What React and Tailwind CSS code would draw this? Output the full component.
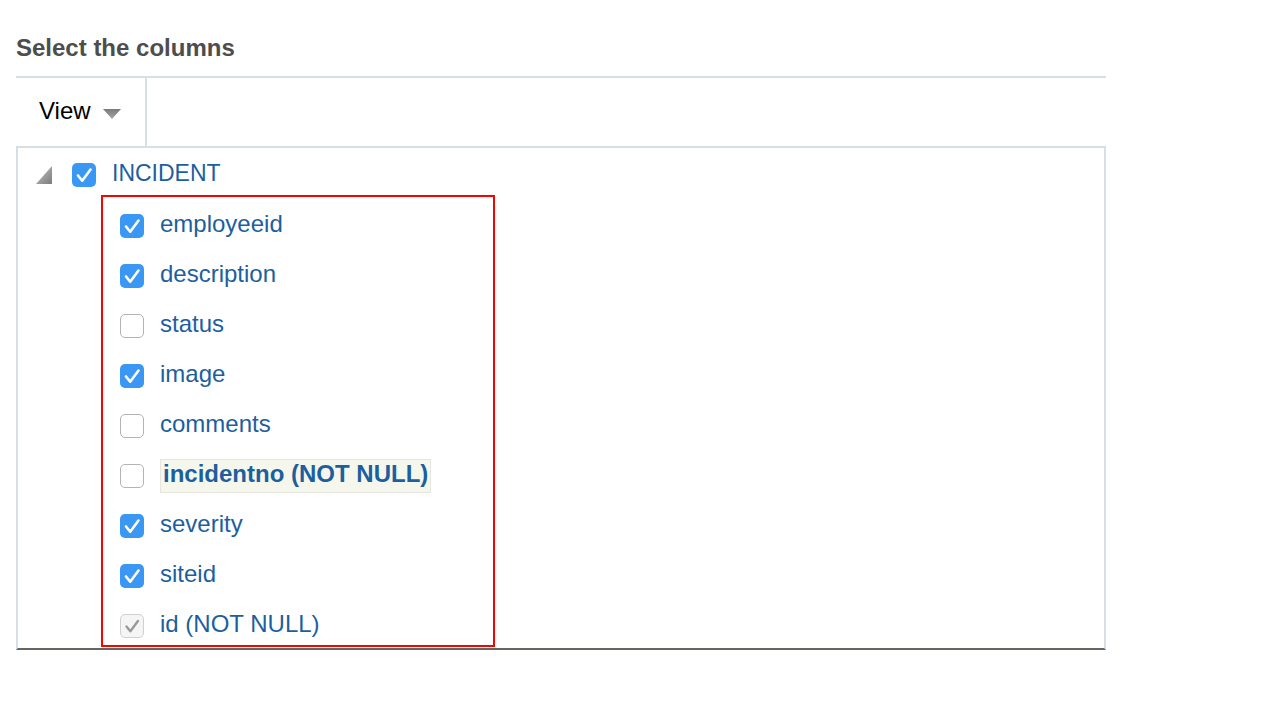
import React from "react";

const columns = [
  { name: "employeeid", state: "on" },
  { name: "description", state: "on" },
  { name: "status", state: "off" },
  { name: "image", state: "on" },
  { name: "comments", state: "off" },
  { name: "incidentno (NOT NULL)", state: "off", highlight: true },
  { name: "severity", state: "on" },
  { name: "siteid", state: "on" },
  { name: "id (NOT NULL)", state: "disabled" },
];

function Check({ color }) {
  return (
    <svg viewBox="0 0 24 24" className="w-[24px] h-[24px]">
      <path
        d="M6 12.5l4.2 5.2L18.5 6.5"
        fill="none"
        stroke={color}
        strokeWidth="2.6"
        strokeLinecap="round"
        strokeLinejoin="round"
      />
    </svg>
  );
}

function Checkbox({ state }) {
  if (state === "on") {
    return (
      <span className="flex items-center justify-center w-[24px] h-[24px] rounded-[5px] bg-[#3a98f4] shrink-0">
        <Check color="#ffffff" />
      </span>
    );
  }
  if (state === "disabled") {
    return (
      <span className="flex items-center justify-center w-[24px] h-[24px] rounded-[5px] bg-[#f5f5f5] border border-[#d0d0d0] shrink-0">
        <Check color="#9a9a9a" />
      </span>
    );
  }
  return (
    <span className="block w-[24px] h-[24px] rounded-[5px] bg-white border border-[#b3b3b3] shrink-0" />
  );
}

export default function App() {
  return (
    <div className="bg-white min-h-[702px] pl-[16px] pt-[34px] font-['Liberation_Sans',Arial,sans-serif]">
      <h2 className="text-[24px] leading-[28px] font-bold text-[#4d4d4d]">
        Select the columns
      </h2>

      <div className="w-[1090px] mt-[14px]">
        {/* toolbar */}
        <div className="flex h-[70px] border-t-2 border-[#d6dfe6]">
          <div className="flex items-center w-[131px] border-r-2 border-[#d6dfe6] pl-[23px]">
            <span className="text-[24px] leading-[28px] text-black mb-[2px]">View</span>
            <svg viewBox="0 0 18 10" className="w-[18px] h-[10px] ml-[12px] mt-[3px]">
              <defs>
                <linearGradient id="dd" x1="0" y1="0" x2="0" y2="1">
                  <stop offset="0" stopColor="#7a7a7a" />
                  <stop offset="1" stopColor="#a5a5a5" />
                </linearGradient>
              </defs>
              <path d="M0 0h18L9 10z" fill="url(#dd)" />
            </svg>
          </div>
        </div>

        {/* tree */}
        <div className="h-[504px] border-2 border-[#d6dfe6] border-b-[#666660] overflow-hidden">
          <div className="flex items-center h-[40px] mt-[7px] pl-[18px]">
            <svg viewBox="0 0 16 18" className="w-[16px] h-[18px]">
              <defs>
                <linearGradient id="tri" x1="0" y1="0" x2="1" y2="1">
                  <stop offset="0" stopColor="#c4c4c4" />
                  <stop offset="1" stopColor="#7c7c7c" />
                </linearGradient>
              </defs>
              <path d="M16 0v18H0z" fill="url(#tri)" />
            </svg>
            <span className="ml-[20px]">
              <Checkbox state="on" />
            </span>
            <span className="ml-[16px] text-[23px] leading-[28px] text-[#1d5f9e] mb-[4px]">
              INCIDENT
            </span>
          </div>

          <div className="ml-[83px] w-[394px] h-[452px] border-2 border-[#ff0000] pt-[4px] pl-[17px] overflow-hidden">
            {columns.map((c) => (
              <div key={c.name} className="flex items-center h-[50px]">
                <Checkbox state={c.state} />
                {c.highlight ? (
                  <span className="ml-[16px] h-[34px] flex items-center pl-[2px] pr-[2px] pb-[4px] bg-[#f6f7ec] border border-[#e6e6e0] text-[24px] leading-[28px] font-bold text-[#1d5f9e] text-[23.6px]">
                    {c.name}
                  </span>
                ) : (
                  <span className="ml-[16px] text-[24px] leading-[28px] text-[#1d5f9e] mb-[5px]">
                    {c.name}
                  </span>
                )}
              </div>
            ))}
          </div>
        </div>
      </div>
    </div>
  );
}
